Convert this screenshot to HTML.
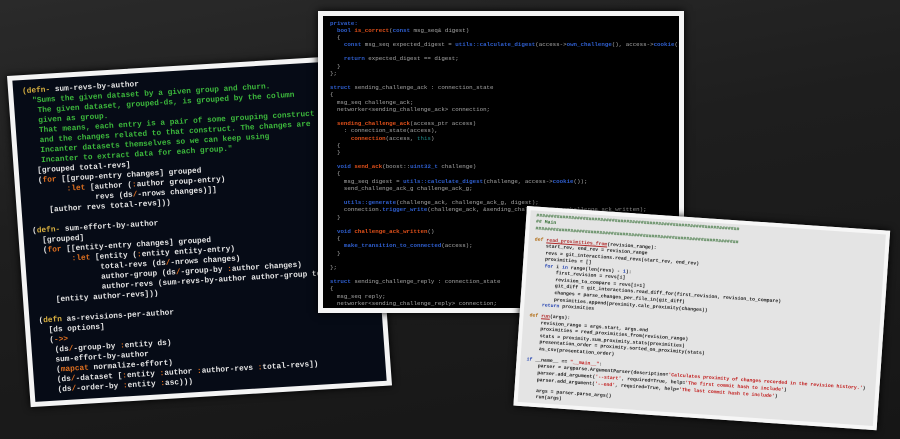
<!DOCTYPE html>
<html><head><meta charset="utf-8"><style>
html,body{margin:0;padding:0}
body{width:900px;height:439px;overflow:hidden;position:relative;background:linear-gradient(170deg,#2a2a2a 0%,#1e1e1e 40%,#161616 100%);font-family:"Liberation Mono",monospace}
.p{position:absolute;transform-origin:0 0;box-sizing:border-box;overflow:hidden}
pre{margin:0;font-family:"Liberation Mono",monospace;white-space:pre}
#l{left:7px;top:76px;width:362px;height:332px;border:5px solid #f4f4f4;background:#060b16;transform:matrix(0.998,-0.06,0.0715,0.9974,0,0);box-shadow:0 0 8px #000}
#l pre{font-size:7.8px;line-height:10px;color:#e4e4e4;padding:7px 0 0 9px;font-weight:bold}
.g{color:#3cb83c}.o{color:#e07020}.y{color:#d8b040}
#c{left:318px;top:11px;width:366px;height:302px;border:5px solid #f4f4f4;background:#000;box-shadow:0 0 8px #000}
#c pre{font-size:5.8px;line-height:7.18px;color:#a8a8a8;padding:3.5px 0 0 7px}
.k{color:#2f5fd0;font-weight:bold}.f{color:#e0501a;font-weight:bold}.t{color:#1e8a8a}
#r{left:527px;top:206px;width:364px;height:200px;border:4px solid #f6f6f6;background:#e4e4e4;transform:rotate(3.9deg);box-shadow:0 0 8px #000}
#r pre{font-size:4.85px;line-height:6.55px;color:#1c1c1c;font-weight:bold;padding:2.5px 0 0 6px}
.h{color:#2e6a2e}.d{color:#b06a10}.n{color:#b02a2a;text-decoration:underline}.s{color:#c01818}.b{color:#2040b0}
.sp{display:block;height:4.5px}
</style></head><body>
<div class="p" id="l"><pre><span class="y">(defn-</span> sum-revs-by-author
  <span class="g">"Sums the given dataset by a given group and churn.
   The given dataset, grouped-ds, is grouped by the column
   given as group.
   That means, each entry is a pair of some grouping construct
   and the changes related to that construct. The changes are
   Incanter datasets themselves so we can keep using
   Incanter to extract data for each group."</span>
  [grouped total-revs]
  (<span class="o">for</span> [[group-entry changes] grouped
        <span class="o">:let</span> [author (<span class="o">:</span>author group-entry)
              revs (ds<span class="o">/</span>-nrows changes)]]
    [author revs total-revs]))

(<span class="y">defn-</span> sum-effort-by-author
  [grouped]
  (<span class="o">for</span> [[entity-entry changes] grouped
        <span class="o">:let</span> [entity (<span class="o">:</span>entity entity-entry)
              total-revs (ds<span class="o">/</span>-nrows changes)
              author-group (ds<span class="o">/</span>-group-by <span class="o">:</span>author changes)
              author-revs (sum-revs-by-author author-group total-revs)]]
    [entity author-revs]))

(<span class="y">defn</span> as-revisions-per-author
  [ds options]
  (<span class="o">-&gt;&gt;</span>
   (ds<span class="o">/</span>-group-by <span class="o">:</span>entity ds)
   sum-effort-by-author
   (<span class="o">mapcat</span> normalize-effort)
   (ds<span class="o">/</span>-dataset [<span class="o">:</span>entity <span class="o">:</span>author <span class="o">:</span>author-revs <span class="o">:</span>total-revs])
   (ds<span class="o">/</span>-order-by <span class="o">:</span>entity <span class="o">:</span>asc)))</pre></div>
<div class="p" id="c"><pre><span class="k">private:</span>
  <span class="k">bool</span> <span class="f">is_correct</span>(<span class="k">const</span> msg_seq&amp; digest)
  {
    <span class="k">const</span> msg_seq expected_digest = <span class="k">utils::calculate_digest</span>(access-&gt;<span class="k">own_challenge</span>(), access-&gt;<span class="k">cookie</span>());

    <span class="k">return</span> expected_digest == digest;
  }
};

<span class="k">struct</span> sending_challenge_ack : connection_state
{
  msg_seq challenge_ack;
  networker&lt;sending_challenge_ack&gt; connection;

  <span class="f">sending_challenge_ack</span>(access_ptr access)
    : connection_state(access),
      <span class="f">connection</span>(access, <span class="t">this</span>)
  {
  }

  <span class="k">void</span> <span class="f">send_ack</span>(boost::<span class="k">uint32_t</span> challenge)
  {
    msg_seq digest = <span class="k">utils::calculate_digest</span>(challenge, access-&gt;<span class="k">cookie</span>());
    send_challenge_ack_g challenge_ack_g;

    <span class="k">utils::generate</span>(challenge_ack, challenge_ack_g, digest);
    connection.<span class="k">trigger_write</span>(challenge_ack, &amp;sending_challenge_ack::challenge_ack_written);
  }

  <span class="k">void</span> <span class="f">challenge_ack_written</span>()
  {
    <span class="k">make_transition_to_connected</span>(access);
  }

};

<span class="k">struct</span> sending_challenge_reply : connection_state
{
  msg_seq reply;
  networker&lt;sending_challenge_reply&gt; connection;</pre></div>
<div class="p" id="r"><pre><span class="h">######################################################################
## Main
######################################################################</span><span class="sp"></span><span class="d">def</span> <span class="n">read_proximities_from</span>(revision_range):
    start_rev, end_rev = revision_range
    revs = git_interactions.read_revs(start_rev, end_rev)
    proximities = []
    <span class="b">for</span> i <span class="b">in</span> range(len(revs) - <span class="b">1</span>):
        first_revision = revs[i]
        revision_to_compare = revs[i+1]
        git_diff = git_interactions.read_diff_for(first_revision, revision_to_compare)
        changes = parse_changes_per_file_in(git_diff)
        proximities.append(proximity.calc_proximity(changes))
    <span class="b">return</span> proximities
<span class="sp"></span><span class="d">def</span> <span class="n">run</span>(args):
    revision_range = args.start, args.end
    proximities = read_proximities_from(revision_range)
    stats = proximity.sum_proximity_stats(proximities)
    presentation_order = proximity.sorted_on_proximity(stats)
    as_csv(presentation_order)
<span class="sp"></span><span class="b">if</span> __name__ == <span class="s">"__main__"</span>:
    parser = argparse.ArgumentParser(description=<span class="s">'Calculates proximity of changes recorded in the revision history.'</span>)
    parser.add_argument(<span class="s">'--start'</span>, required=True, help=<span class="s">'The first commit hash to include'</span>)
    parser.add_argument(<span class="s">'--end'</span>, required=True, help=<span class="s">'The last commit hash to include'</span>)
<span class="sp"></span>    args = parser.parse_args()
    run(args)</pre></div>
</body></html>
